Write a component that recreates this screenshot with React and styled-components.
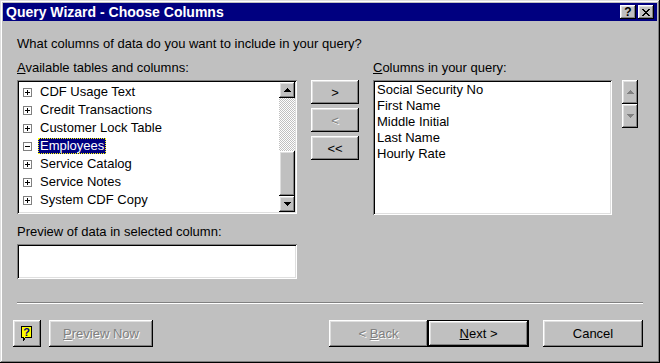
import styled, { createGlobalStyle, css } from "styled-components";

const tables = [
  { name: "CDF Usage Text" },
  { name: "Credit Transactions" },
  { name: "Customer Lock Table" },
  { name: "Employees", open: true, selected: true },
  { name: "Service Catalog" },
  { name: "Service Notes" },
  { name: "System CDF Copy" },
];

const chosen = [
  "Social Security No",
  "First Name",
  "Middle Initial",
  "Last Name",
  "Hourly Rate",
];

const Expander = ({ open }) => (
  <svg width="9" height="9" viewBox="0 0 9 9" shapeRendering="crispEdges">
    <rect x="0.5" y="0.5" width="8" height="8" fill="#fff" stroke="#808080" />
    <path d="M2 4.5h5" stroke="#000" />
    {!open && <path d="M4.5 2v5" stroke="#000" />}
  </svg>
);

const Arrow = ({ dir, color = "#000" }) => (
  <svg width="7" height="4" viewBox="0 0 7 4" shapeRendering="crispEdges">
    <path
      fill={color}
      d={
        dir === "up"
          ? "M3 0h1v1h1v1h1v1h1v1H0V3h1V2h1V1h1z"
          : "M0 0h7v1H6v1H5v1H4v1H3V3H2V2H1V1H0z"
      }
    />
  </svg>
);

const CloseGlyph = () => (
  <svg width="8" height="7" viewBox="0 0 8 7" shapeRendering="crispEdges">
    <path
      fill="#000"
      d="M0 0h2v1h1v1h2V1h1V0h2v1H7v1H6v1H5v1h1v1h1v1h1v1H6V6H5V5H3v1H2v1H0V6h1V5h1V4h1V3H2V2H1V1H0z"
    />
  </svg>
);

const HelpBubble = () => (
  <svg width="12" height="16" viewBox="0 0 12 16" shapeRendering="crispEdges">
    <path d="M0.5 0.5h10v11h-6l-2 3v-3h-2z" fill="#ffff00" stroke="#000" />
    <text
      x="5.5"
      y="10"
      textAnchor="middle"
      fontFamily="Liberation Sans, Arial, sans-serif"
      fontWeight="bold"
      fontSize="11"
      fill="#000080"
    >
      ?
    </text>
  </svg>
);

export default function App() {
  return (
    <>
      <GlobalStyle />
      <Window>
        <TitleBar>
          <TitleText>Query Wizard - Choose Columns</TitleText>
          <TitleButtons>
            <CaptionButton>?</CaptionButton>
            <CaptionButton>
              <CloseGlyph />
            </CaptionButton>
          </TitleButtons>
        </TitleBar>

        <Content>
          <Prompt>What columns of data do you want to include in your query?</Prompt>

          <Main>
            <Column $w={280}>
              <Label>
                <u>A</u>vailable tables and columns:
              </Label>
              <ListBox $h={134}>
                <Tree>
                  {tables.map((t) => (
                    <TreeRow key={t.name}>
                      <Expander open={t.open} />
                      <TreeText $selected={t.selected}>{t.name}</TreeText>
                    </TreeRow>
                  ))}
                </Tree>
                <ScrollBar>
                  <ScrollButton>
                    <Arrow dir="up" />
                  </ScrollButton>
                  <Track>
                    <Thumb />
                  </Track>
                  <ScrollButton>
                    <Arrow dir="down" />
                  </ScrollButton>
                </ScrollBar>
              </ListBox>
              <Label $top={10}>Preview of data in selected column:</Label>
              <PreviewBox />
            </Column>

            <MoveButtons>
              <Button $w={48} $h={24}>&gt;</Button>
              <Button $w={48} $h={24} disabled>
                &lt;
              </Button>
              <Button $w={48} $h={24}>&lt;&lt;</Button>
            </MoveButtons>

            <Column $w={239} $left={14}>
              <Label>
                <u>C</u>olumns in your query:
              </Label>
              <ListBox $h={135}>
                <Fields>
                  {chosen.map((c) => (
                    <FieldRow key={c}>{c}</FieldRow>
                  ))}
                </Fields>
              </ListBox>
            </Column>

            <OrderButtons>
              <Button $w={16} $h={24} disabled>
                <Arrow dir="up" color="#808080" />
              </Button>
              <Button $w={16} $h={24} disabled>
                <Arrow dir="down" color="#808080" />
              </Button>
            </OrderButtons>
          </Main>

          <Separator />

          <BottomRow>
            <Button $w={28}>
              <HelpBubble />
            </Button>
            <Button $w={104} $left={8} disabled>
              <span>
                <u>P</u>review Now
              </span>
            </Button>
            <Spacer />
            <Button $w={99} disabled>
              <span>
                &lt; <u>B</u>ack
              </span>
            </Button>
            <Button $w={101} $default>
              <span>
                <u>N</u>ext &gt;
              </span>
            </Button>
            <Button $w={100} $left={14}>
              Cancel
            </Button>
          </BottomRow>
        </Content>
      </Window>
    </>
  );
}

// Styled components

const GlobalStyle = createGlobalStyle`
  html, body {
    margin: 0;
    padding: 0;
    background: #c0c0c0;
  }
  body {
    font-family: "Liberation Sans", Arial, sans-serif;
    font-size: 13px;
    color: #000;
  }
`;

const raised = css`
  background: #c0c0c0;
  box-shadow: inset -1px -1px #000, inset 1px 1px #fff, inset -2px -2px #808080,
    inset 2px 2px #dfdfdf;
`;

const sunken = css`
  background: #fff;
  box-shadow: inset 1px 1px #808080, inset -1px -1px #fff, inset 2px 2px #000,
    inset -2px -2px #dfdfdf;
`;

const Window = styled.div`
  width: 660px;
  height: 363px;
  box-sizing: border-box;
  padding: 3px;
  background: #c0c0c0;
  box-shadow: inset -1px -1px #000, inset 1px 1px #dfdfdf, inset -2px -2px #808080,
    inset 2px 2px #fff;
  display: flex;
  flex-direction: column;
`;

const TitleBar = styled.div`
  height: 18px;
  background: #000080;
  color: #fff;
  display: flex;
  align-items: center;
  justify-content: space-between;
  padding: 0 3px 0 3px;
`;

const TitleText = styled.span`
  font-weight: bold;
  font-size: 14px;
  line-height: 18px;
`;

const TitleButtons = styled.div`
  display: flex;
  gap: 2px;
`;

const CaptionButton = styled.div`
  ${raised}
  width: 16px;
  height: 14px;
  display: flex;
  align-items: center;
  justify-content: center;
  color: #000;
  font-weight: bold;
  font-size: 12px;
  line-height: 14px;
`;

const Content = styled.div`
  padding: 0 14px;
  display: flex;
  flex-direction: column;
`;

const Prompt = styled.div`
  margin-top: 15px;
  line-height: 16px;
`;

const Main = styled.div`
  display: flex;
  margin-top: 8px;
`;

const Column = styled.div`
  width: ${(p) => p.$w}px;
  margin-left: ${(p) => p.$left || 0}px;
  display: flex;
  flex-direction: column;
`;

const Label = styled.div`
  line-height: 16px;
  margin-top: ${(p) => p.$top || 0}px;
  margin-bottom: 4px;
`;

const ListBox = styled.div`
  ${sunken}
  height: ${(p) => p.$h}px;
  box-sizing: border-box;
  padding: 2px;
  display: flex;
`;

const Tree = styled.div`
  flex: 1;
  padding: 1px 0 0 4px;
`;

const TreeRow = styled.div`
  height: 18px;
  display: flex;
  align-items: center;
  gap: 6px;
`;

const TreeText = styled.span`
  padding: 0 2px;
  line-height: 16px;
  white-space: nowrap;
  ${(p) =>
    p.$selected &&
    css`
      background: #000080;
      color: #fff;
      outline: 1px dotted #ffff00;
      outline-offset: -1px;
    `}
`;

const ScrollBar = styled.div`
  width: 16px;
  display: flex;
  flex-direction: column;
`;

const ScrollButton = styled.div`
  ${raised}
  width: 16px;
  height: 16px;
  display: flex;
  align-items: center;
  justify-content: center;
`;

const Track = styled.div`
  flex: 1;
  display: flex;
  flex-direction: column;
  justify-content: flex-end;
  background: repeating-conic-gradient(#c0c0c0 0% 25%, #fff 0% 50%) 0 0 / 2px 2px;
`;

const Thumb = styled.div`
  ${raised}
  height: 45px;
`;

const PreviewBox = styled.div`
  ${sunken}
  height: 35px;
`;

const Fields = styled.div`
  flex: 1;
  padding-left: 2px;
`;

const FieldRow = styled.div`
  line-height: 16px;
  white-space: nowrap;
`;

const MoveButtons = styled.div`
  margin-left: 14px;
  padding-top: 20px;
  display: flex;
  flex-direction: column;
  gap: 4px;
`;

const OrderButtons = styled.div`
  margin-left: 10px;
  padding-top: 20px;
  display: flex;
  flex-direction: column;
`;

const Button = styled.button`
  ${raised}
  border: 0;
  margin: 0 0 0 ${(p) => p.$left || 0}px;
  padding: 0;
  width: ${(p) => p.$w}px;
  height: ${(p) => p.$h || 27}px;
  font: inherit;
  color: ${(p) => (p.disabled ? "#808080" : "#000")};
  text-shadow: ${(p) => (p.disabled ? "1px 1px #fff" : "none")};
  display: flex;
  align-items: center;
  justify-content: center;
  flex-shrink: 0;
  ${(p) =>
    p.$default &&
    css`
      box-shadow: inset 0 0 0 1px #000, inset -2px -2px #000, inset 2px 2px #fff,
        inset -3px -3px #808080, inset 3px 3px #dfdfdf;
    `}
`;

const Separator = styled.div`
  margin-top: 23px;
  border-top: 1px solid #808080;
  border-bottom: 1px solid #fff;
`;

const BottomRow = styled.div`
  margin: 16px 0 0 -4px;
  display: flex;
  align-items: center;
`;

const Spacer = styled.div`
  flex: 1;
`;
